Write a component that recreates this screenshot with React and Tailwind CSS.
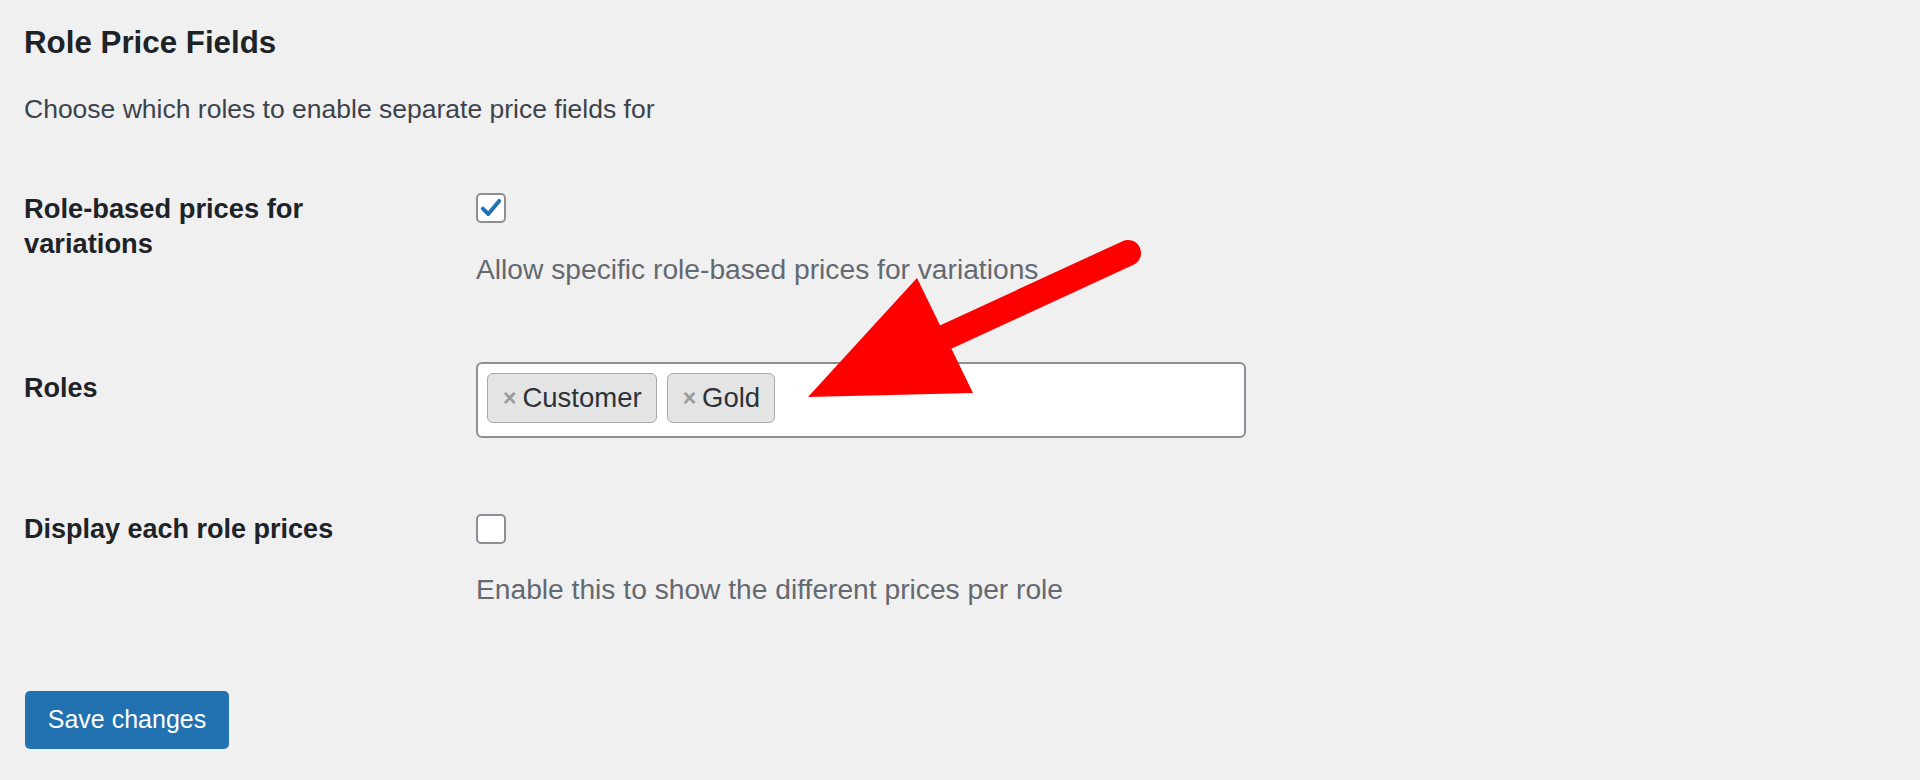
import React from 'react'

const font = { fontFamily: '"Liberation Sans", Arial, sans-serif' }

const Checkbox = ({ checked }) => (
  <span className="mt-[2px] flex h-[30px] w-[30px] items-center justify-center rounded-[5px] border-2 border-[#8c8f94] bg-white">
    {checked && (
      <svg width="24" height="24" viewBox="0 0 22 22">
        <path d="M3.5 11.5 L8.5 16.5 L18.5 4.5" fill="none" stroke="#2271b1" strokeWidth="3.6" strokeLinecap="round" strokeLinejoin="round" />
      </svg>
    )}
  </span>
)

const Tag = ({ label }) => (
  <span className="flex h-[50px] items-center rounded-[6px] border border-[#aaaaaa] bg-[#e4e4e4] pl-[15px] pr-[14px] text-[27.5px] text-[#2c3338]">
    <span className="mr-[6px] text-[23px] font-bold text-[#999999]">×</span>
    {label}
  </span>
)

export default function App() {
  return (
    <div className="relative min-h-[780px] w-full bg-[#f0f0f1] pl-6 pt-6" style={font}>
      <h2 className="text-[31.3px] font-bold leading-[37px] text-[#1d2327]">Role Price Fields</h2>
      <p className="mt-[30px] text-[26.5px] leading-[36px] text-[#3c434a]">
        Choose which roles to enable separate price fields for
      </p>

      {/* row: variations */}
      <div className="mt-[64px] flex">
        <div className="w-[452px] pr-[60px] text-[27.3px] font-bold leading-[35px] text-[#1d2327]">
          Role-based prices for variations
        </div>
        <div className="flex flex-col">
          <Checkbox checked />
          <p className="mt-[28px] text-[28.2px] leading-[36px] text-[#646970]">
            Allow specific role-based prices for variations
          </p>
        </div>
      </div>

      {/* row: roles */}
      <div className="mt-[75px] flex">
        <div className="mt-[9px] w-[452px] text-[27px] font-bold leading-[35px] text-[#1d2327]">Roles</div>
        <div className="flex h-[76px] w-[770px] items-start gap-[10px] rounded-[6px] border-2 border-[#8c8f94] bg-white pl-[9px] pt-[9px]">
          <Tag label="Customer" />
          <Tag label="Gold" />
        </div>
      </div>

      {/* row: display */}
      <div className="mt-[74px] flex">
        <div className="w-[452px] text-[27px] font-bold leading-[35px] text-[#1d2327]">Display each role prices</div>
        <div className="flex flex-col">
          <Checkbox />
          <p className="mt-[27px] text-[28.2px] leading-[36px] text-[#646970]">
            Enable this to show the different prices per role
          </p>
        </div>
      </div>

      <button className="ml-[1px] mt-[84px] flex h-[58px] w-[204px] items-center justify-center rounded-[5px] bg-[#2271b1] text-[25px] text-white">
        Save changes
      </button>

      <svg className="pointer-events-none absolute left-0 top-0" width="1920" height="780" viewBox="0 0 1920 780">
        <line x1="1128" y1="253" x2="935" y2="342" stroke="#ff0000" strokeWidth="26" strokeLinecap="round" />
        <polygon points="808,397 917,278 973,393" fill="#ff0000" />
      </svg>
    </div>
  )
}
